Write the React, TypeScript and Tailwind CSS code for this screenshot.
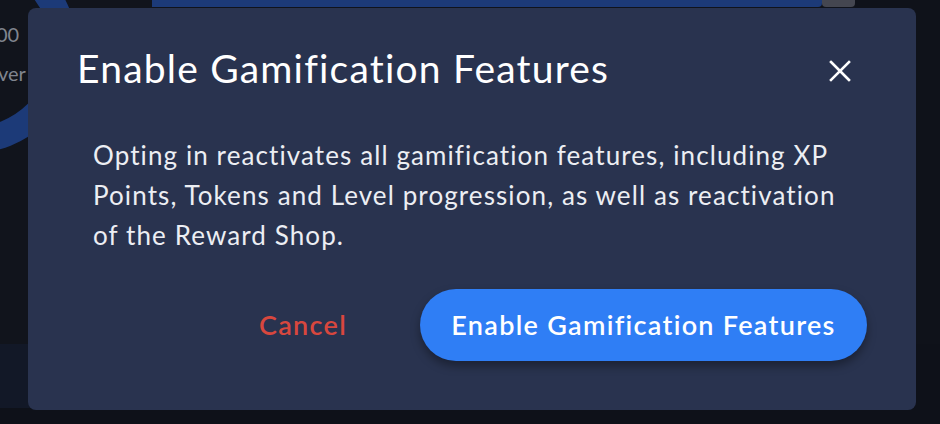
function Donut() {
  return (
    <svg width="150" height="160" viewBox="0 0 150 160" className="block">
      <circle cx="-28" cy="48" r="92" fill="none" stroke="#1c3a78" strokeWidth="26" />
    </svg>
  )
}

function CloseIcon() {
  return (
    <svg width="22" height="22" viewBox="0 0 22 22" fill="none" stroke="currentColor" strokeWidth="2.6" strokeLinecap="square">
      <path d="M2 2L20 20M20 2L2 20" />
    </svg>
  )
}

export default function App() {
  return (
    <div className="relative h-[424px] w-[940px] overflow-hidden bg-[#0e1119] font-['Lato','Noto_Sans',sans-serif]">
      {/* page behind the dialog */}
      <div className="flex h-[344px]">
        <aside className="relative w-[152px] bg-[#11141c]">
          <Donut />
          <div className="absolute left-[-4px] top-[22px] text-[20px] leading-6 text-[#80858f]">00</div>
          <div className="absolute left-[-2px] top-[61px] text-[20px] leading-6 text-[#80858f]">ver</div>
        </aside>
        <div className="flex w-[703px] flex-col bg-[#10131b]">
          <div className="flex h-[7px]">
            <div className="w-[670px] rounded-br-sm bg-[#1c3a78]" />
            <div className="flex-1 rounded-b-sm bg-[#444650]" />
          </div>
        </div>
        <div className="flex-1 bg-[#0f121a]" />
      </div>
      <div className="h-[64px] w-[152px] bg-[#121827]" />

      {/* dialog */}
      <div className="absolute inset-0 pl-[28px] pt-[8px]">
        <div className="flex h-[402px] w-[888px] flex-col rounded-lg bg-[#29334f] pl-[49px] pr-[49px] pt-[36px]">
          <div className="flex h-[48px] items-center justify-between">
            <h2 className="text-[39px] font-normal leading-[48px] tracking-[1.2px] text-white">Enable Gamification Features</h2>
            <button className="mr-[16px] mt-[5px] text-white">
              <CloseIcon />
            </button>
          </div>
          <p className="mt-[43px] pl-[16px] text-[26px] leading-[40px] tracking-[1.1px] text-[#eceef3]">
            Opting in reactivates all gamification features, including XP
            <br />
            Points, Tokens and Level progression, as well as reactivation
            <br />
            of the Reward Shop.
          </p>
          <div className="mt-[34px] flex items-center justify-end gap-[73px]">
            <button className="text-[27px] font-semibold tracking-[1.3px] text-[#d8473e]">Cancel</button>
            <button className="h-[72px] w-[447px] rounded-full bg-[#2f7ef5] text-[27px] font-semibold tracking-[1.3px] text-white shadow-[0_5px_10px_rgba(0,0,0,0.35)]">
              Enable Gamification Features
            </button>
          </div>
        </div>
      </div>
    </div>
  )
}
